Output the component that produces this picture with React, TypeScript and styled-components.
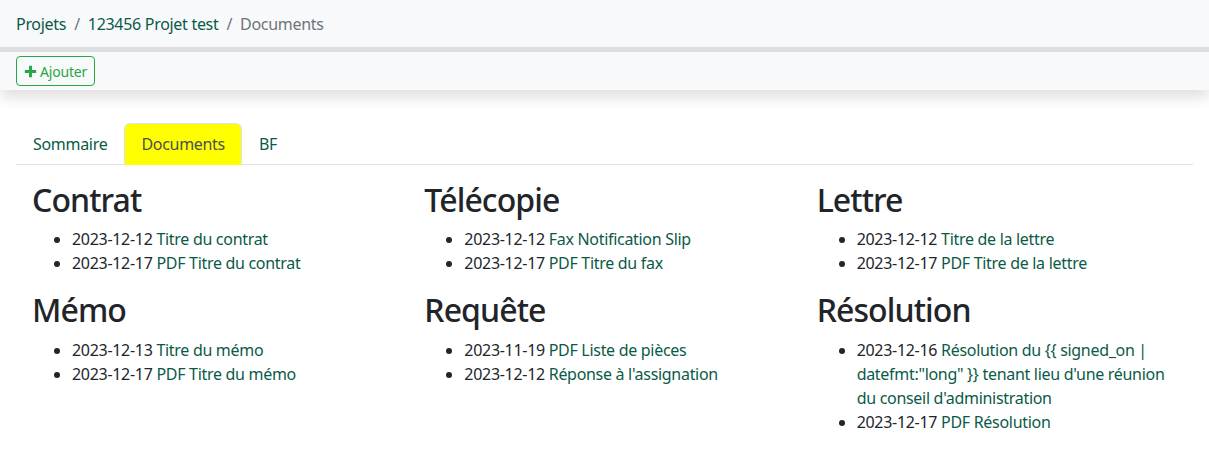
import React from "react"
import styled, { createGlobalStyle } from "styled-components"

const GlobalStyle = createGlobalStyle`
  html, body {
    margin: 0;
    padding: 0;
    background: #fff;
  }
  body {
    font-family: "Noto Sans", "Open Sans", Roboto, sans-serif;
    font-size: 16px;
    line-height: 1.5;
    letter-spacing: -0.3px;
    color: #212529;
  }
  * {
    box-sizing: border-box;
  }
`

type Doc = {
  date: string
  title: string
  pdf?: boolean
}

type Group = {
  name: string
  docs: Doc[]
}

const groups: Group[] = [
  {
    name: "Contrat",
    docs: [
      { date: "2023-12-12", title: "Titre du contrat" },
      { date: "2023-12-17", title: "Titre du contrat", pdf: true },
    ],
  },
  {
    name: "Télécopie",
    docs: [
      { date: "2023-12-12", title: "Fax Notification Slip" },
      { date: "2023-12-17", title: "Titre du fax", pdf: true },
    ],
  },
  {
    name: "Lettre",
    docs: [
      { date: "2023-12-12", title: "Titre de la lettre" },
      { date: "2023-12-17", title: "Titre de la lettre", pdf: true },
    ],
  },
  {
    name: "Mémo",
    docs: [
      { date: "2023-12-13", title: "Titre du mémo" },
      { date: "2023-12-17", title: "Titre du mémo", pdf: true },
    ],
  },
  {
    name: "Requête",
    docs: [
      { date: "2023-11-19", title: "Liste de pièces", pdf: true },
      { date: "2023-12-12", title: "Réponse à l'assignation" },
    ],
  },
  {
    name: "Résolution",
    docs: [
      {
        date: "2023-12-16",
        title:
          "Résolution du {{ signed_on | datefmt:\"long\" }} tenant lieu d'une réunion du conseil d'administration",
      },
      { date: "2023-12-17", title: "Résolution", pdf: true },
    ],
  },
]

const tabs = ["Sommaire", "Documents", "BF"]

const App = () => {
  return (
    <>
      <GlobalStyle />
      <Breadcrumb>
        <Crumb href="#">Projets</Crumb>
        <Sep>/</Sep>
        <Crumb href="#">123456 Projet test</Crumb>
        <Sep>/</Sep>
        <Current>Documents</Current>
      </Breadcrumb>
      <Toolbar>
        <AddButton>
          <PlusIcon viewBox="0 0 16 16">
            <path d="M6.2 1h3.6v5.2H15v3.6H9.8V15H6.2V9.8H1V6.2h5.2z" />
          </PlusIcon>
          Ajouter
        </AddButton>
      </Toolbar>
      <Main>
        <Tabs>
          {tabs.map((t) => (
            <Tab key={t} $active={t === "Documents"}>
              {t}
            </Tab>
          ))}
        </Tabs>
        <Grid>
          {groups.map((g) => (
            <Column key={g.name}>
              <Heading>{g.name}</Heading>
              <DocList>
                {g.docs.map((d, i) => (
                  <li key={i}>
                    {d.date}{" "}
                    <DocLink href="#">
                      {d.pdf ? "PDF " : ""}
                      {d.title}
                    </DocLink>
                  </li>
                ))}
              </DocList>
            </Column>
          ))}
        </Grid>
      </Main>
    </>
  )
}

export default App

const linkColor = "#0b5a48"

const Breadcrumb = styled.nav`
  display: flex;
  align-items: center;
  height: 52px;
  padding: 0 16px;
  background: #f8f9fa;
  border-bottom: 5px solid #dedfe0;
`

const Crumb = styled.a`
  color: ${linkColor};
  text-decoration: none;
`

const Sep = styled.span`
  color: #6c757d;
  padding: 0 8px;
`

const Current = styled.span`
  color: #6c757d;
`

const Toolbar = styled.div`
  display: flex;
  align-items: center;
  height: 38px;
  padding: 0 16px;
  background: #f8f9fa;
  box-shadow: 0 8px 14px rgba(0, 0, 0, 0.12);
  position: relative;
`

const AddButton = styled.button`
  display: inline-flex;
  align-items: center;
  gap: 3px;
  height: 30px;
  padding: 0 7px;
  font-family: inherit;
  font-size: 14px;
  letter-spacing: -0.2px;
  color: #28a745;
  background: transparent;
  border: 1px solid #28a745;
  border-radius: 4px;
`

const PlusIcon = styled.svg`
  width: 13px;
  height: 13px;
  fill: #28a745;
`

const Main = styled.main`
  padding: 33px 16px 0;
`

const Tabs = styled.ul`
  display: flex;
  list-style: none;
  margin: 0;
  padding: 0;
  border-bottom: 1px solid #dee2e6;
`

const Tab = styled.li<{ $active?: boolean }>`
  padding: 8px 16px;
  margin-bottom: -1px;
  border: 1px solid ${(p) => (p.$active ? "#dee2e6" : "transparent")};
  border-bottom-color: ${(p) => (p.$active ? "#ffff00" : "transparent")};
  border-radius: 6px 6px 0 0;
  background: ${(p) => (p.$active ? "#ffff00" : "transparent")};
  color: ${(p) => (p.$active ? "#495057" : linkColor)};
  line-height: 24px;
`

const Grid = styled.div`
  display: grid;
  grid-template-columns: repeat(3, 1fr);
  padding-top: 16px;
`

const Column = styled.section`
  padding: 0 16px;
`

const Heading = styled.h2`
  margin: 0 0 8px;
  font-size: 32px;
  font-weight: 500;
  line-height: 1.2;
  letter-spacing: -0.9px;
  color: #212529;
`

const DocList = styled.ul`
  margin: 0 0 16px;
  padding-left: 40px;
`

const DocLink = styled.a`
  color: ${linkColor};
  text-decoration: none;
`
